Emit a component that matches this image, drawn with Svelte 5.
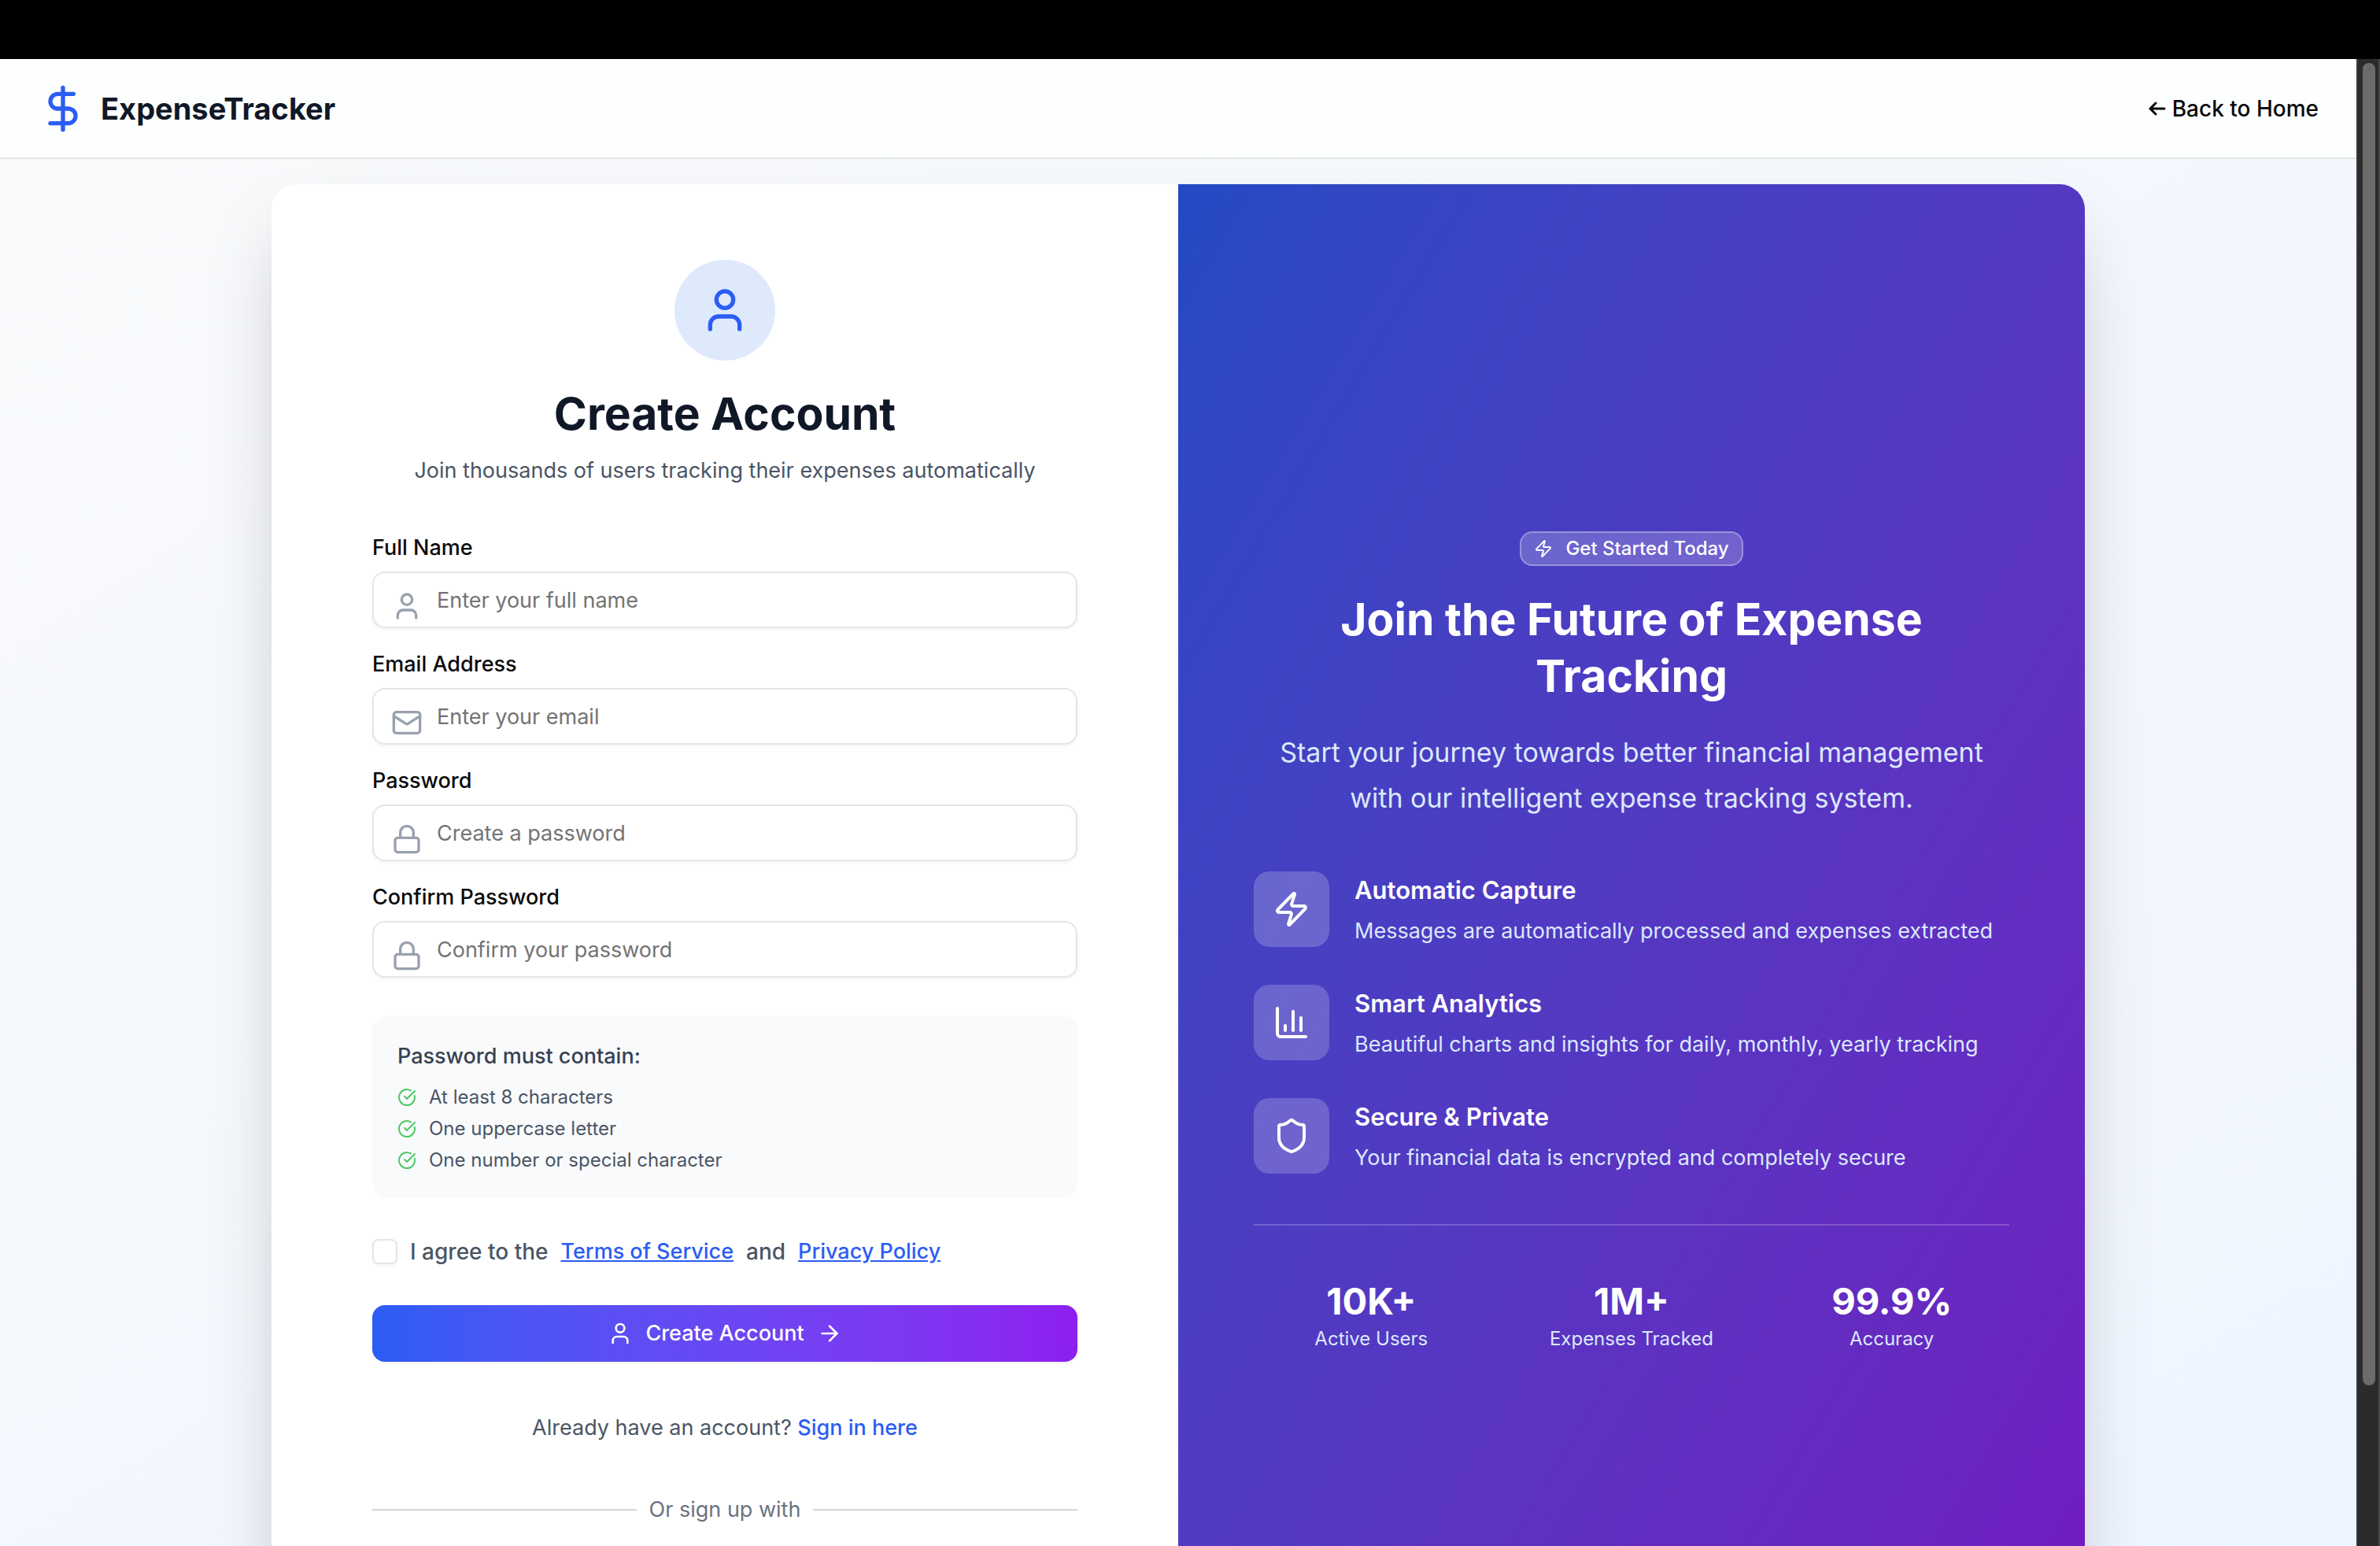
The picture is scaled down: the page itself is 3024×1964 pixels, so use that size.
<script>
  const fields = [
    { id: 'name', label: 'Full Name', placeholder: 'Enter your full name', type: 'text', icon: 'user' },
    { id: 'email', label: 'Email Address', placeholder: 'Enter your email', type: 'email', icon: 'mail' },
    { id: 'password', label: 'Password', placeholder: 'Create a password', type: 'password', icon: 'lock' },
    { id: 'confirm', label: 'Confirm Password', placeholder: 'Confirm your password', type: 'password', icon: 'lock' }
  ];
  const rules = ['At least 8 characters', 'One uppercase letter', 'One number or special character'];
  const features = [
    { icon: 'zap', title: 'Automatic Capture', text: 'Messages are automatically processed and expenses extracted' },
    { icon: 'chart', title: 'Smart Analytics', text: 'Beautiful charts and insights for daily, monthly, yearly tracking' },
    { icon: 'shield', title: 'Secure & Private', text: 'Your financial data is encrypted and completely secure' }
  ];
  const stats = [
    { value: '10K+', label: 'Active Users' },
    { value: '1M+', label: 'Expenses Tracked' },
    { value: '99.9%', label: 'Accuracy' }
  ];
</script>

{#snippet icon(name, size)}
  <svg class="icon {size}" viewBox="0 0 24 24" aria-hidden="true">
    {#if name === 'dollar'}
      <path d="M12 2v20" /><path d="M17 5H9.5a3.5 3.5 0 0 0 0 7h5a3.5 3.5 0 0 1 0 7H6" />
    {:else if name === 'user'}
      <path d="M19 21v-2a4 4 0 0 0-4-4H9a4 4 0 0 0-4 4v2" /><circle cx="12" cy="7" r="4" />
    {:else if name === 'mail'}
      <path d="m22 7-8.991 5.727a2 2 0 0 1-2.009 0L2 7" /><rect x="2" y="4" width="20" height="16" rx="2" />
    {:else if name === 'lock'}
      <rect x="3" y="11" width="18" height="11" rx="2" /><path d="M7 11V7a5 5 0 0 1 10 0v4" />
    {:else if name === 'check'}
      <path d="M21.801 10A10 10 0 1 1 17 3.335" /><path d="m9 11 3 3L22 4" />
    {:else if name === 'arrow'}
      <path d="M5 12h14" /><path d="m12 5 7 7-7 7" />
    {:else if name === 'zap'}
      <path d="M4 14a1 1 0 0 1-.78-1.63l9.9-10.2a.5.5 0 0 1 .86.46l-1.92 6.02A1 1 0 0 0 13 10h7a1 1 0 0 1 .78 1.63l-9.9 10.2a.5.5 0 0 1-.86-.46l1.92-6.02A1 1 0 0 0 11 14z" />
    {:else if name === 'chart'}
      <path d="M3 3v16a2 2 0 0 0 2 2h16" /><path d="M18 17V9" /><path d="M13 17V5" /><path d="M8 17v-3" />
    {:else if name === 'shield'}
      <path d="M20 13c0 5-3.5 7.5-7.66 8.95a1 1 0 0 1-.67-.01C7.5 20.5 4 18 4 13V6a1 1 0 0 1 1-1c2 0 4.5-1.2 6.24-2.72a1.17 1.17 0 0 1 1.52 0C14.51 3.81 17 5 19 5a1 1 0 0 1 1 1z" />
    {/if}
  </svg>
{/snippet}

<div class="window">
  <div class="titlebar"></div>
  <div class="viewport">
    <div class="page">
      <header>
        <div class="brand">
          {@render icon('dollar', 's64')}
          <span>ExpenseTracker</span>
        </div>
        <a class="back" href="#home">
          <svg class="back-arrow" viewBox="0 0 22 18" aria-hidden="true">
            <path d="M20 9H2M9 2 2 9l7 7" />
          </svg>
          Back to Home
        </a>
      </header>

      <main class="card">
        <section class="signup">
          <form onsubmit={(e) => e.preventDefault()}>
            <div class="avatar">{@render icon('user', 's64')}</div>
            <h1>Create Account</h1>
            <p class="lead">Join thousands of users tracking their expenses automatically</p>

            <div class="fields">
              {#each fields as field (field.id)}
                <div class="field">
                  <label for={field.id}>{field.label}</label>
                  <div class="control">
                    <span class="control-icon">{@render icon(field.icon, 's40')}</span>
                    <input id={field.id} type={field.type} placeholder={field.placeholder} />
                  </div>
                </div>
              {/each}
            </div>

            <div class="rules">
              <p>Password must contain:</p>
              <ul>
                {#each rules as rule}
                  <li>{@render icon('check', 's24')}{rule}</li>
                {/each}
              </ul>
            </div>

            <div class="agree">
              <input id="terms" type="checkbox" />
              <label for="terms">I agree to the</label>
              <a href="#terms">Terms of Service</a>
              <span>and</span>
              <a href="#privacy">Privacy Policy</a>
            </div>

            <button class="submit" type="submit">
              {@render icon('user', 's32')}
              Create Account
              {@render icon('arrow', 's32')}
            </button>

            <p class="signin">Already have an account? <a href="#signin">Sign in here</a></p>

            <div class="divider"><span>Or sign up with</span></div>
          </form>
        </section>

        <section class="promo">
          <div class="badge">{@render icon('zap', 's24')}Get Started Today</div>
          <h2>Join the Future of Expense Tracking</h2>
          <p class="pitch">Start your journey towards better financial management with our intelligent expense tracking system.</p>

          <div class="features">
            {#each features as feature}
              <div class="feature">
                <div class="tile">{@render icon(feature.icon, 's48')}</div>
                <div>
                  <h3>{feature.title}</h3>
                  <p>{feature.text}</p>
                </div>
              </div>
            {/each}
          </div>

          <div class="stats">
            {#each stats as stat}
              <div>
                <strong>{stat.value}</strong>
                <span>{stat.label}</span>
              </div>
            {/each}
          </div>
        </section>
      </main>
    </div>
    <div class="scrollbar"><div class="thumb"></div></div>
  </div>
</div>

<style>
  :global(body) {
    font-family: Inter, 'Liberation Sans', sans-serif;
    font-size: 27px;
    line-height: 40px;
    color: #0a0a0a;
  }

  h1, h2, h3, p, ul {
    margin: 0;
    padding: 0;
  }

  a {
    color: #2b5cf5;
    font-weight: 500;
    text-decoration: none;
  }

  .window {
    display: flex;
    flex-direction: column;
    height: 100vh;
    overflow: hidden;
  }

  .titlebar {
    flex: none;
    height: 75px;
    background: #000;
  }

  .viewport {
    display: flex;
    flex: 1;
    min-height: 0;
  }

  .page {
    flex: 1;
    min-width: 0;
    overflow: hidden;
    background: linear-gradient(to bottom right, #f9fafb, #eff5ff);
  }

  .scrollbar {
    flex: none;
    box-sizing: border-box;
    width: 30px;
    padding: 5px 4px 5px 6px;
    border-left: 2px solid #3c3c3c;
    border-right: 2px solid #484848;
    background: #2b2b2b;
  }

  .thumb {
    width: 16px;
    height: 89.4%;
    border-radius: 8px;
    background: #6b6b6b;
  }

  .icon {
    display: block;
    flex: none;
    fill: none;
    stroke: currentColor;
    stroke-width: 2;
    stroke-linecap: round;
    stroke-linejoin: round;
  }

  .s24 { width: 24px; height: 24px; }
  .s32 { width: 32px; height: 32px; }
  .s40 { width: 40px; height: 40px; }
  .s48 { width: 48px; height: 48px; }
  .s64 { width: 64px; height: 64px; }

  header {
    display: flex;
    align-items: center;
    justify-content: space-between;
    height: 125px;
    padding: 0 48px;
    border-bottom: 2px solid #e4e5e5;
    background: #fdfefe;
  }

  .brand {
    display: flex;
    align-items: center;
    gap: 16px;
    color: #101828;
    font-size: 38px;
    font-weight: 700;
  }

  .brand .icon {
    color: #2b5df5;
  }

  .back {
    display: flex;
    align-items: center;
    gap: 8px;
    color: #0a0a0a;
    font-size: 28px;
  }

  .back-arrow {
    width: 22px;
    height: 18px;
    fill: none;
    stroke: currentColor;
    stroke-width: 3;
    stroke-linecap: round;
    stroke-linejoin: round;
  }

  .card {
    display: grid;
    grid-template-columns: 1fr 1fr;
    max-width: 2304px;
    margin: 32px auto;
    border-radius: 32px;
    overflow: hidden;
    background: #fff;
    box-shadow: 0 50px 100px -24px rgba(0, 0, 0, 0.25);
  }

  .signup {
    padding: 96px 96px 220px;
  }

  form {
    max-width: 896px;
    margin: 0 auto;
  }

  .avatar {
    display: grid;
    place-items: center;
    width: 128px;
    height: 128px;
    margin: 0 auto 32px;
    border-radius: 50%;
    background: #dee9fc;
    color: #2b5df5;
  }

  h1, h2 {
    font-size: 57px;
    line-height: 72px;
    font-weight: 700;
    text-align: center;
  }

  h1 {
    color: #101828;
  }

  .lead {
    margin: 16px 0 64px;
    color: #4a5565;
    text-align: center;
  }

  .fields {
    display: grid;
    gap: 32px;
  }

  .field {
    display: grid;
    gap: 16px;
  }

  .field label {
    line-height: 28px;
    font-weight: 500;
  }

  .control {
    position: relative;
  }

  .control-icon {
    position: absolute;
    left: 24px;
    top: 24px;
    color: #99a1af;
  }

  .control input {
    display: block;
    box-sizing: border-box;
    width: 100%;
    height: 72px;
    padding: 0 24px 0 80px;
    border: 2px solid #e5e5e5;
    border-radius: 16px;
    background: transparent;
    box-shadow: 0 2px 4px rgba(0, 0, 0, 0.05);
    font: inherit;
    color: inherit;
  }

  .control input::placeholder {
    color: #737373;
    opacity: 1;
  }

  .rules {
    margin: 48px 0;
    padding: 32px;
    border-radius: 20px;
    background: #f9fafb;
  }

  .rules p {
    margin-bottom: 16px;
    color: #364153;
    font-weight: 500;
  }

  .rules ul {
    display: grid;
    gap: 8px;
    list-style: none;
  }

  .rules li {
    display: flex;
    align-items: center;
    gap: 16px;
    color: #4a5565;
    font-size: 24px;
    line-height: 32px;
  }

  .rules .icon {
    color: #4bc764;
  }

  .agree {
    display: flex;
    align-items: center;
    gap: 16px;
    margin-bottom: 48px;
    color: #4a5565;
    font-size: 28px;
    font-weight: 500;
  }

  .agree input {
    appearance: none;
    box-sizing: border-box;
    width: 32px;
    height: 32px;
    margin: 0;
    border: 2px solid #e5e5e5;
    border-radius: 8px;
    background: #fff;
    box-shadow: 0 2px 4px rgba(0, 0, 0, 0.05);
  }

  .agree a {
    font-size: 27px;
    text-decoration: underline;
  }

  .submit {
    display: flex;
    align-items: center;
    justify-content: center;
    gap: 16px;
    width: 100%;
    height: 72px;
    border: 0;
    border-radius: 16px;
    background: linear-gradient(to right in oklab, #2b5df4, #8e1ef0);
    box-shadow: 0 2px 4px rgba(0, 0, 0, 0.05);
    color: #fff;
    font: inherit;
    font-weight: 500;
  }

  .signin {
    margin: 64px 0;
    color: #4a5565;
    text-align: center;
  }

  .divider {
    display: flex;
    align-items: center;
    gap: 16px;
    color: #6a7282;
  }

  .divider::before, .divider::after {
    content: '';
    flex: 1;
    height: 2px;
    background: #d1d5dc;
  }

  .promo {
    display: flex;
    flex-direction: column;
    justify-content: center;
    padding: 96px;
    background: linear-gradient(to bottom right in oklab, #224ac3, #7218c0);
    color: #fff;
  }

  .badge {
    display: flex;
    align-items: center;
    align-self: center;
    gap: 16px;
    margin-bottom: 32px;
    padding: 4px 16px;
    border: 2px solid rgba(255, 255, 255, 0.3);
    border-radius: 16px;
    background: rgba(255, 255, 255, 0.2);
    font-size: 24px;
    line-height: 32px;
    font-weight: 500;
  }

  .pitch {
    margin: 32px 0 64px;
    color: #dbe8fd;
    font-size: 34px;
    line-height: 58px;
    text-align: center;
  }

  .features {
    display: grid;
    gap: 48px;
    margin-bottom: 64px;
  }

  .feature {
    display: flex;
    align-items: center;
    gap: 32px;
  }

  .tile {
    display: grid;
    place-items: center;
    flex: none;
    width: 96px;
    height: 96px;
    border-radius: 20px;
    background: rgba(255, 255, 255, 0.2);
  }

  h3 {
    margin-bottom: 8px;
    font-size: 31px;
    line-height: 48px;
    font-weight: 600;
  }

  .feature p {
    color: #dbe8fd;
  }

  .stats {
    display: grid;
    grid-template-columns: repeat(3, 1fr);
    gap: 32px;
    padding-top: 64px;
    border-top: 2px solid rgba(255, 255, 255, 0.2);
    text-align: center;
  }

  .stats strong {
    display: block;
    font-size: 47px;
    line-height: 64px;
    font-weight: 700;
  }

  .stats span {
    display: block;
    color: #dbe8fd;
    font-size: 24px;
    line-height: 32px;
  }
</style>
